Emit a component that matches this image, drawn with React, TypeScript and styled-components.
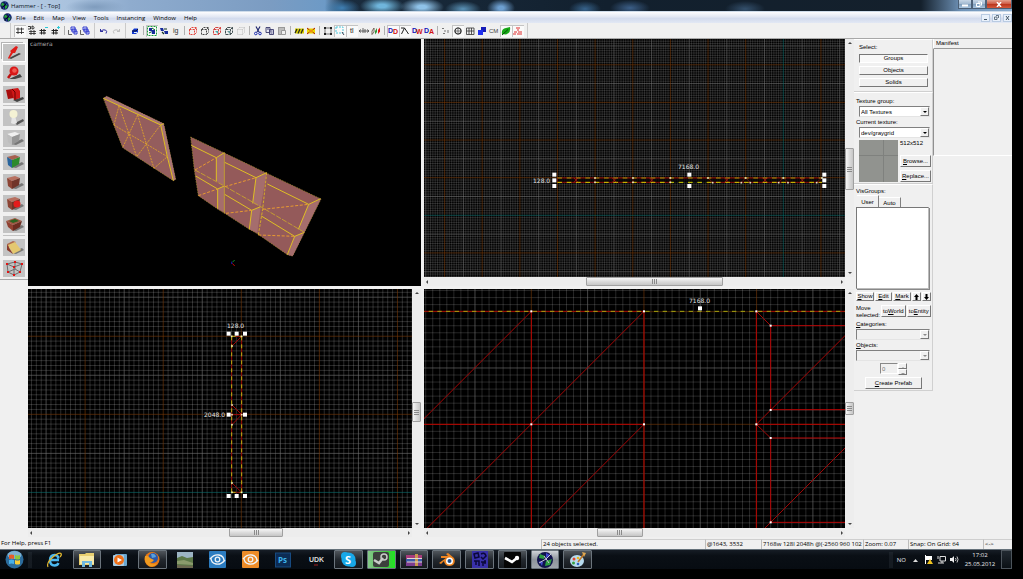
import React from "react";
import styled, { createGlobalStyle, css } from "styled-components";

const GlobalStyle = createGlobalStyle`
  * { box-sizing: border-box; }
  html, body { margin: 0; background: #000; }
  body, button, input, select {
    font-family: "Open Sans", "Noto Sans", sans-serif;
    font-size: 6px;
    line-height: 8px;
    color: #000;
  }
  button, input, select { margin: 0; padding: 0; border: 0; border-radius: 0; background: none; }
  svg { display: block; }
`;

/* ---------- window frame ---------- */

const Desktop = styled.div`
  min-height: 100vh;
  display: flex;
  flex-direction: column;
  padding: 0 11px 10px 0;
  background: #000;
`;

const TitleBar = styled.header`
  height: 12px;
  display: flex;
  align-items: center;
  background:
    radial-gradient(ellipse 30px 8px at 95px 7px, #7f9cbd 0, transparent 100%),
    radial-gradient(ellipse 18px 9px at 342px 8px, #3f7fb3 0, transparent 100%),
    radial-gradient(ellipse 22px 9px at 382px 6px, #6fb5db 20%, transparent 100%),
    radial-gradient(ellipse 22px 9px at 422px 7px, #8fc2e8 20%, transparent 100%),
    radial-gradient(ellipse 18px 8px at 463px 9px, #5b93b8 0, transparent 100%),
    radial-gradient(ellipse 14px 9px at 501px 8px, #6d9fd0 20%, transparent 100%),
    radial-gradient(ellipse 16px 8px at 585px 9px, #37638c 0, transparent 100%),
    radial-gradient(ellipse 20px 8px at 630px 8px, #3c5f88 0, transparent 100%),
    radial-gradient(ellipse 20px 8px at 745px 9px, #34506c 0, transparent 100%),
    linear-gradient(90deg, #b9cde4 0, #a9c2de 70px, #8facce 130px, #7b9cc2 270px, #6d9ac6 325px, #1a2c3e 345px, #12202e 60%, #14202c 91%, #6f93b8 95%, #8caed0 100%);
  border-bottom: 1px solid #cfdcea;
`;

const AppMark = styled.span`
  width: 9px;
  margin-right: 2px;
`;

const MenuMark = styled.span`
  width: 12px;
`;

const TitleText = styled.h1`
  margin: 0;
  flex: 1;
  font-size: 6px;
  font-weight: 400;
  color: #0c161e;
`;

const WindowButtons = styled.div`
  align-self: flex-start;
  display: flex;
`;

const WindowButton = styled.button<{ $close?: boolean }>`
  width: ${(p) => (p.$close ? 26 : 14)}px;
  height: 9px;
  display: grid;
  place-items: center;
  border: 1px solid #4c6076;
  border-top: 0;
  background: ${(p) =>
    p.$close
      ? "linear-gradient(#e3a08e, #d0604a 45%, #b8331a 50%, #d2593c)"
      : "linear-gradient(#c6d6e6, #a4bbd2 45%, #7d9cba 50%, #a8c4de)"};
`;

const MenuBar = styled.nav`
  height: 11px;
  display: flex;
  align-items: center;
  background: linear-gradient(#fdfdfe, #e4e9f4 40%, #d3dbed 60%, #e2e8f4);
`;

const MenuItem = styled.button`
  padding: 0 4px;
`;

const MenuSpacer = styled.div`
  flex: 1;
`;

const ChildButton = styled.button`
  width: 9px;
  height: 8px;
  margin-left: 2px;
  display: grid;
  place-items: center;
  border: 1px solid #b9cbe2;
  background: #e9f1fb;
`;

const ToolBar = styled.div`
  height: 15px;
  display: flex;
  align-items: center;
  padding-left: 10px;
  background: #f0f0f0;
`;

const ToolGroup = styled.div<{ $first?: boolean }>`
  height: 15px;
  display: flex;
  align-items: center;
  padding: 0 3px;
  border-left: ${(p) => (p.$first ? "1px solid #cacaca" : "0")};
  border-right: 1px solid #cacaca;
`;

const ToolButton = styled.button<{ $on?: boolean }>`
  width: 12px;
  height: 12px;
  display: grid;
  place-items: center;
  ${(p) =>
    p.$on &&
    css`
      background: #fafafa;
      box-shadow: inset 1px 1px #c4c4c4;
    `}
`;

const ToolSeparator = styled.span`
  width: 1px;
  height: 9px;
  margin: 0 2px;
  background: #b0b0b0;
`;

const Main = styled.main`
  flex: 1;
  display: flex;
  background: #f0f0f0;
  border-top: 1px solid #a8a8a8;
`;

/* ---------- left tool column ---------- */

const SideTools = styled.div`
  flex: 0 0 28px;
  padding-top: 2px;
`;

const SideToolsInner = styled.div`
  padding: 3px 3px 2px;
  border-bottom: 1px solid #a8a8a8;
`;

const SideGroup = styled.div`
  display: flex;
  flex-direction: column;
  gap: 4px;
  & + & {
    margin-top: 2px;
    padding-top: 3px;
    border-top: 1px solid #c2c2c2;
  }
`;

const SideButton = styled.button<{ $on?: boolean }>`
  width: 22px;
  height: 17px;
  background: #c3c3c3;
  outline: ${(p) => (p.$on ? "1px solid #fff" : "0")};
  box-shadow: ${(p) => (p.$on ? "-2px -2px #b4b4b4" : "none")};
`;

/* ---------- viewports ---------- */

const Viewports = styled.div`
  flex: 1;
  min-width: 0;
  display: grid;
  grid-template-columns: 393fr 430fr;
  grid-template-rows: 247fr 248fr;
  gap: 3px;
  padding-bottom: 2px;
`;

const Pane = styled.section<{ $plain?: boolean }>`
  min-width: 0;
  min-height: 0;
  display: grid;
  grid-template-columns: ${(p) => (p.$plain ? "1fr" : "1fr 9px")};
  grid-template-rows: ${(p) => (p.$plain ? "1fr" : "1fr 9px")};
  background: #f0f0f0;
`;

const Canvas = styled.div`
  position: relative;
  overflow: hidden;
  background: #000;
  min-height: 0;
`;

const Drawing = styled.svg`
  position: absolute;
  inset: 0;
  width: 100%;
  height: 100%;
`;

const labelFont = {
  fontFamily: '"DejaVu Sans", sans-serif',
  fontSize: 6,
  fill: "#e4e4e4",
};

const Bar = styled.div<{ $v?: boolean; $parts: string }>`
  display: grid;
  ${(p) =>
    p.$v
      ? css`grid-template-rows: 8px ${p.$parts} 8px;`
      : css`grid-template-columns: 8px ${p.$parts} 8px;`}
  background: #ededed;
`;

const BarButton = styled.button`
  display: grid;
  place-items: center;
`;

const Thumb = styled.span<{ $v?: boolean }>`
  display: grid;
  place-items: center;
  border: 1px solid #a0a0a0;
  border-radius: 1px;
  background: linear-gradient(${(p) => (p.$v ? "90deg" : "180deg")}, #f6f6f6, #dcdcdc 50%, #c6c6c6);
`;

const arrowPath = {
  up: "M2 5L4 3L6 5Z",
  down: "M2 3L4 5L6 3Z",
  left: "M4 2L2 4L4 6Z",
  right: "M4 2L6 4L4 6Z",
};

function Arrow({ dir, color = "#444" }: { dir: keyof typeof arrowPath; color?: string }) {
  return (
    <svg width="8" height="8" viewBox="0 0 8 8">
      <path d={arrowPath[dir]} fill={color} />
    </svg>
  );
}

function ScrollBar({ v, before, size, after }: { v?: boolean; before: number; size: number; after: number }) {
  return (
    <Bar $v={v} $parts={`${before}fr ${size}fr ${after}fr`}>
      <BarButton aria-label={v ? "Scroll up" : "Scroll left"}>
        <Arrow dir={v ? "up" : "left"} />
      </BarButton>
      <span />
      <Thumb $v={v}>
        <svg width="5" height="5" viewBox="0 0 5 5">
          <path d={v ? "M0 .5H5M0 2.5H5M0 4.5H5" : "M.5 0V5M2.5 0V5M4.5 0V5"} stroke="#8a8a8a" />
        </svg>
      </Thumb>
      <span />
      <BarButton aria-label={v ? "Scroll down" : "Scroll right"}>
        <Arrow dir={v ? "down" : "right"} />
      </BarButton>
    </Bar>
  );
}

/* Grid of 64-unit squares, with brighter lines each 512 and coloured ones each 1024. */
function Grid({ step, ox, oy, axisX, axisY, dim }: { step: number; ox: number; oy: number; axisX?: number; axisY?: number; dim: number }) {
  const paths = { minor: "", mid: "", major: "", axis: "" };
  const add = (origin: number, limit: number, axis: number | undefined, line: (p: number) => string) => {
    const first = Math.ceil(-origin / step);
    for (let k = first; origin + k * step < limit; k++) {
      const kind = k === axis ? "axis" : k % 16 === 0 ? "major" : k % 8 === 0 ? "mid" : "minor";
      paths[kind] += line(+(origin + k * step).toFixed(2));
    }
  };
  add(ox, 1920, axisX, (p) => `M${p} 0V1200`);
  add(oy, 1200, axisY, (p) => `M0 ${p}H1920`);
  return (
    <g strokeWidth=".6" fill="none">
      <path d={paths.minor} stroke="#fff" strokeOpacity={dim} />
      <path d={paths.mid} stroke="#757575" />
      <path d={paths.major} stroke="#7a3a08" />
      <path d={paths.axis} stroke="#0a7272" />
    </g>
  );
}

function Points({ at, size, fill = "#fff" }: { at: number[][]; size: number; fill?: string }) {
  return (
    <g fill={fill}>
      {at.map(([x, y]) => (
        <rect key={`${x}-${y}`} x={x - size / 2} y={y - size / 2} width={size} height={size} />
      ))}
    </g>
  );
}

const unit = "scale(.33333)";

function CameraView() {
  return (
    <Drawing role="img" aria-label="3D camera view">
      <text x="2" y="7" {...labelFont} fill="#a8a8a8">camera</text>
      <g transform={`translate(62 41) ${unit}`} fill="none" strokeWidth="3">
        <path d="M40 55L50 49L221 131L257 298L250 302L98 203Z" fill="#945d5d" stroke="#a08a2c" strokeDasharray="5 3" strokeWidth="2" />
        <path d="M40 55L50 49L221 131L257 298L250 302L212 135Z" fill="#a87474" />
        <path d="M40 55L212 135L232 230L250 302M212 135L221 131" stroke="#e0c020" />
        <path d="M87 77L72 135M87 77L117 162L140 230M143 105L117 162L98 203M143 105L169 192L192 265M210 137L169 192L140 230M72 135L117 162L169 192L232 230L192 265" stroke="#d89c30" strokeDasharray="6 3" strokeWidth="3" />
        <path d="M302 171L693 357L608 528L592 524L500 460L478 448L404 400L384 388L325 347L313 270Z" fill="#945a5a" stroke="#a08a2c" strokeDasharray="5 3" strokeWidth="2" />
        <path d="M379 233L403 218V318L379 303ZM498 293L530 278L512 380L488 370ZM656 373L692 356L643 457L625 448ZM383 327L403 318V397L383 386ZM485 391L512 380L502 458L478 448ZM614 469L643 457L608 528L592 524Z" fill="#a56d6d" />
        <path d="M304 196L379 233L403 218M379 233V303M317 288L383 327L403 318M383 327V386M404 247L498 293L530 278M498 293L488 370M404 343L485 391L512 380M485 391L478 448M532 312L656 373L692 356M656 373L625 448M514 408L614 469L643 457M614 469L592 524" stroke="#dfbf24" />
        <path d="M403 218V400" stroke="#c09c34" />
        <path d="M315 270L403 318L512 380L643 457" stroke="#c49c32" strokeDasharray="16 4" />
        <path d="M315 270L379 233M325 347L383 327M405 320L498 293M408 400L485 391M518 388L656 373M505 465L614 469" stroke="#e89a30" strokeDasharray="9 5" />
        <path d="M530 278L518 388L505 465" stroke="#d4aa28" strokeDasharray="8 4" />
        <path d="M434 540L427 547" stroke="#0a9a20" />
        <path d="M427 550L434 558" stroke="#c00808" />
        <path d="M425 545V552" stroke="#1010b0" />
      </g>
    </Drawing>
  );
}

function TopView() {
  const crosses = [498, 613, 725, 950, 1065, 1177];
  return (
    <Drawing role="img" aria-label="Top view">
      <Grid step={2.352} ox={359.3} oy={176.3} axisX={0} axisY={0} dim={0.23} />
      <g transform={`translate(-14 101) ${unit}`} fill="none">
        <rect x="442" y="114" width="794" height="14" fill="#000" fillOpacity=".7" />
        <path d="M442 114H1236M442 127H781M894 127H1236" stroke="#8c0808" strokeWidth="3" />
        <path d="M442 114H1236" stroke="#a0a010" strokeWidth="3" strokeDasharray="14 14" />
        <path d="M442 127H1236" stroke="#d6d600" strokeWidth="3" strokeDasharray="14 14" />
        <path d="M442 114V127M555 114V127M669 114V127M781 114V127M894 114L908 127M1007 114L994 127M1007 114L1021 127M1120 114L1106 127M1120 114L1134 127M1236 114L1220 127" stroke="#8c1010" strokeWidth="2" />
        <path d={crosses.map((x) => `M${x - 6} 114L${x + 6} 127M${x + 6} 114L${x - 6} 127`).join("")} stroke="#d01818" strokeWidth="2" />
        <Points size={5} fill="#e8e8c0" at={[[555, 114], [555, 127], [669, 114], [669, 127], [781, 114], [781, 127], [894, 114], [908, 128], [994, 128], [1007, 114], [1021, 128], [1106, 128], [1120, 114], [1134, 128], [1220, 128], [1236, 114]]} />
        <Points size={12} at={[[433, 104], [433, 121], [433, 138], [838, 104], [838, 138], [1243, 104], [1243, 121], [1243, 138]]} />
      </g>
      <text x="254" y="130" {...labelFont}>7168.0</text>
      <text x="109" y="144" {...labelFont}>128.0</text>
    </Drawing>
  );
}

function FrontView() {
  return (
    <Drawing role="img" aria-label="Front view">
      <Grid step={4.88} ox={213.3} oy={203.4} axisY={0} dim={0.28} />
      <g transform={`translate(172 11) ${unit}`} fill="none">
        <path d="M95 109V577M125 109V577M95 109H125M95 577H125" stroke="#9c0808" strokeWidth="3" />
        <path d="M95 109V577M125 109V577M95 109H125M95 577H125" stroke="#b4b414" strokeWidth="3" strokeDasharray="12 12" />
        <path d="M96 138L125 109M96 315L125 344L96 374M95 344H125M96 549L125 577" stroke="#a00808" strokeWidth="3" />
        <Points size={5} fill="#e8e8b0" at={[[95, 109], [125, 109], [96, 138], [96, 315], [96, 344], [125, 344], [96, 374], [96, 549], [96, 577], [125, 577]]} />
        <Points size={12} at={[[86, 101], [110, 101], [135, 101], [86, 344], [135, 344], [86, 588], [110, 588], [135, 588]]} />
      </g>
      <text x="199" y="39" {...labelFont}>128.0</text>
      <text x="176" y="128" {...labelFont}>2048.0</text>
    </Drawing>
  );
}

function SideView() {
  return (
    <Drawing role="img" aria-label="Side view">
      <Grid step={7.04} ox={107.3} oy={135.3} dim={0.25} />
      <g transform={`translate(-4 -4) ${unit}`} fill="none" strokeWidth="3">
        <path d="M0 79H672M1009 79H1290" stroke="#a80808" />
        <path d="M0 79H1290" stroke="#a8a810" strokeDasharray="13 13" />
        <path d="M334 79V740M672 79V740M1009 79V740M1052 122V374M1052 459V712M0 418H672M1009 418H1290M1052 122H1290M1052 374H1290M1052 459H1290M1052 712H1290" stroke="#b80404" />
        <path d="M334 79L0 413M672 79L10 741M672 418L349 741M1009 79L1052 122M1009 418L1290 137M1009 418L1052 459M1024 740L1290 474" stroke="#a40606" />
        <Points size={6} at={[[334, 79], [672, 79], [1009, 79], [334, 418], [672, 418], [1009, 418], [1052, 122], [1052, 375], [1052, 459], [1052, 712]]} />
        <Points size={12} at={[[840, 70]]} />
      </g>
      <text x="265" y="14" {...labelFont}>7168.0</text>
    </Drawing>
  );
}

/* ---------- right hand panels ---------- */

const ControlColumn = styled.aside`
  flex: 0 0 79px;
  font-family: "Liberation Sans", Arial, sans-serif;
  button, select, input { font-family: inherit; }
`;

const Panel = styled.section`
  display: flex;
  flex-direction: column;
  padding: 3px 1px 1px 2px;
  border: 1px solid #d0d0d0;
  border-top-color: #fff;
  border-left: 0;
`;

const PanelRow = styled.div<{ $gap?: number; $top?: number; $indent?: boolean; $center?: boolean }>`
  display: flex;
  gap: ${(p) => p.$gap ?? 2}px;
  margin-top: ${(p) => p.$top ?? 0}px;
  padding-left: ${(p) => (p.$indent ? 3 : 0)}px;
  justify-content: ${(p) => (p.$center ? "center" : "flex-start")};
`;

const FieldLabel = styled.label`
  line-height: 10px;
`;

const PanelText = styled.span`
  line-height: 7px;
  white-space: nowrap;
`;

const raised = css`
  background: #f0f0f0;
  border: 1px solid;
  border-color: #fff #777 #777 #fff;
`;

const PushButton = styled.button<{ $tall?: boolean; $on?: boolean; $w?: number }>`
  ${raised}
  flex: ${(p) => (p.$w ? `0 0 ${p.$w}px` : "1")};
  height: ${(p) => (p.$tall ? 12 : 9)}px;
  line-height: ${(p) => (p.$tall ? 10 : 7)}px;
  white-space: nowrap;
  svg { margin: 0 auto; }
  ${(p) =>
    p.$on &&
    css`
      border-color: #777 #fff #fff #777;
      background: #f8f8f8;
    `}
`;

const SelectStack = styled.div`
  display: flex;
  flex-direction: column;
  gap: 3px;
  padding: 1px 3px 3px;
  button { flex: none; }
`;

const Combo = styled.div<{ $indent?: boolean; $off?: boolean }>`
  display: flex;
  height: 11px;
  margin-left: ${(p) => (p.$indent ? 3 : 0)}px;
  margin-right: 1px;
  border: 1px solid;
  border-color: #808080 #e4e4e4 #e4e4e4 #808080;
  background: ${(p) => (p.$off ? "#f0f0f0" : "#fff")};
`;

const ComboSelect = styled.select`
  flex: 1;
  min-width: 0;
  padding-left: 1px;
  appearance: none;
`;

const ComboArrow = styled.span`
  ${raised}
  width: 9px;
  display: grid;
  place-items: center;
  pointer-events: none;
`;

const Texture = styled.div`
  flex: 0 0 39px;
  height: 42px;
  background:
    linear-gradient(#7f817e, #7f817e) 24px 0 / 1px 100% no-repeat,
    linear-gradient(#7f817e, #7f817e) 0 15px / 100% 1px no-repeat,
    #91938f;
`;

const TextureActions = styled.div`
  flex: 1;
  display: flex;
  flex-direction: column;
  gap: 3px;
  button { flex: none; }
  span { height: 12px; }
`;

const Tabs = styled.div`
  display: flex;
  align-items: flex-end;
  padding-left: 1px;
`;

const Tab = styled.button<{ $on?: boolean }>`
  width: 22px;
  height: ${(p) => (p.$on ? 12 : 10)}px;
  border-right: 1px solid #808080;
  border-top: 1px solid #fff;
`;

const VisList = styled.div`
  height: 82px;
  margin: 0 2px 0 0;
  border: 1px solid;
  border-color: #777 #bbb #bbb #777;
  background: #fff;
  box-shadow: 1px 1px #888;
`;

const SpinInput = styled.input`
  width: 18px;
  height: 11px;
  padding-left: 1px;
  border: 1px solid;
  border-color: #888 #fff #fff #888;
  color: #777;
`;

const Spinner = styled.div`
  display: flex;
  flex-direction: column;
`;

const SpinButton = styled.button`
  ${raised}
  width: 9px;
  height: 6px;
  display: grid;
  place-items: center;
  overflow: hidden;
`;

const ManifestColumn = styled.aside`
  flex: 0 0 79px;
  font-family: "Liberation Sans", Arial, sans-serif;
`;

const ManifestTitle = styled.h2`
  margin: 0;
  height: 10px;
  padding-left: 2px;
  border-bottom: 1px solid #999;
  border-left: 1px solid #fff;
  font-size: 6px;
  font-weight: 400;
  line-height: 9px;
`;

const ManifestList = styled.div`
  height: 107px;
  border-left: 1px solid #909090;
  border-bottom: 1px solid #fff;
`;

function Select({ id, value, indent, off }: { id: string; value?: string; indent?: boolean; off?: boolean }) {
  return (
    <Combo $indent={indent} $off={off}>
      <ComboSelect id={id} disabled={off}>
        <option>{value}</option>
      </ComboSelect>
      <ComboArrow>
        <Arrow dir="down" color={off ? "#888" : "#000"} />
      </ComboArrow>
    </Combo>
  );
}

/* ---------- status bar and taskbar ---------- */

const StatusBar = styled.footer`
  height: 10px;
  display: grid;
  grid-template-columns: 1fr 164px 56px 102px 45px 75px 29px;
  background: #f0f0f0;
`;

const StatusCell = styled.span<{ $edge?: boolean }>`
  overflow: hidden;
  padding-left: 1px;
  line-height: 9px;
  white-space: nowrap;
  border-left: ${(p) => (p.$edge ? "1px solid #bdbdbd" : "0")};
  border-top: ${(p) => (p.$edge ? "1px solid #cfcfcf" : "0")};
`;

const TaskBar = styled.nav`
  height: 20px;
  display: flex;
  align-items: center;
  border-top: 1px solid #65717a;
  background: linear-gradient(#161d25, #0a0f15 30%, #070c12);
`;

const StartButton = styled.button`
  width: 28px;
  display: grid;
  place-items: center;
`;

const Grip = styled.span`
  width: 4px;
  height: 16px;
  background: radial-gradient(circle, #48525c 30%, transparent 60%) 0 0 / 2px 2px;
  opacity: 0.6;
`;

const TaskItems = styled.div`
  flex: 0 1 556px;
  margin-left: 6px;
  display: grid;
  grid-template-columns: repeat(17, 1fr);
`;

const TaskItem = styled.button<{ $state?: "open" | "active" | "green" }>`
  height: 19px;
  margin: 0 2px;
  display: grid;
  place-items: center;
  border-radius: 1px;
  ${(p) =>
    p.$state &&
    css`
      border: 1px solid #6b747c;
      background: ${p.$state === "open"
        ? "linear-gradient(#50565c, #23282e 50%, #15191e)"
        : p.$state === "active"
          ? "linear-gradient(#cfd3d8, #8e949b 50%, #a0a6ad)"
          : "linear-gradient(90deg, #86c98a, #40c540 70%, #20e820)"};
    `}
`;

const Tray = styled.div`
  flex: 1;
  display: flex;
  justify-content: flex-end;
  align-items: center;
  gap: 4px;
  color: #e8eaec;
`;

const Clock = styled.time`
  width: 34px;
  text-align: center;
  line-height: 9px;
`;

const ShowDesktop = styled.button`
  width: 11px;
  height: 19px;
  border: 1px solid #4c545b;
  background: linear-gradient(#222a31, #0b1015);
`;

/* ---------- icons ---------- */

const S = ({ w = 12, h = 12, children }: { w?: number; h?: number; children: React.ReactNode }) => (
  <svg width={w} height={h} viewBox={`0 0 ${w} ${h}`} fill="none" aria-hidden="true">
    {children}
  </svg>
);

const HammerGlobe = () => (
  <>
    <circle cx="4.5" cy="4.5" r="4.2" fill="#10205c" />
    <path d="M2 1.500Q4 2 4.500 4Q3 5 1 4.500ZM5 5L7.500 4L7 7L5 8Z" fill="#26a838" />
    <path d="M5 1L8 3L6 4ZM2 6L4 6L4 8Z" fill="#2c54d8" />
    <path d="M2 7.500L6.500 2" stroke="#06080e" />
  </>
);

const mesh = (c: string) => <path d="M4 2.500V9M7.500 2.500V9M2 4H10M2 7.500H10" stroke={c} strokeWidth=".8" />;
const wireCube = (c: string, dash?: string) => (
  <path d="M2.500 4.500H7.500V9.500H2.500ZM4.500 2.500H9.500V7.500M2.500 4.500L4.500 2.500M7.500 4.500L9.500 2.500M7.500 9.500L9.500 7.500" stroke={c} strokeDasharray={dash} strokeWidth=".9" />
);
const windows = (
  <>
    <path d="M4 2H8V5H4ZM5 4H9V7H5ZM7 6H10V9H7Z" fill="#dfe4ff" stroke="#2730c8" strokeWidth=".9" />
    <path d="M1.500 5V9.500H5" stroke="#555" strokeWidth=".9" />
  </>
);
const letter = (t: string, c: string, x: number, y: number) => (
  <text x={x} y={y} fontFamily="Liberation Sans, sans-serif" fontSize="7" fontWeight="700" fill={c}>{t}</text>
);

type ToolDef = { label: string; on?: boolean; icon: React.ReactNode } | "|";

const toolGroups: ToolDef[][] = [
  [
    { label: "Toggle 2D grid", on: true, icon: mesh("#222") },
    { label: "Toggle 3D grid", icon: <><path d="M5 5V10M8 5V10M3 6.500H10M3 8.500H10" stroke="#222" strokeWidth=".8" /><path d="M2 1.500H4.500V4H2M6 1V4Q8.500 4 8 2.500Q7.500 1 6 1" stroke="#222" strokeWidth=".9" /></> },
    { label: "Smaller grid", icon: <><path d="M3.500 4V9.500M6 4V9.500M1.500 5.500H8M1.500 8H8" stroke="#222" /><path d="M7 2.500H10" stroke="#2cc8d8" /></> },
    { label: "Bigger grid", icon: <><path d="M3.500 4V9.500M6 4V9.500M1.500 5.500H8M1.500 8H8" stroke="#222" /><path d="M7 2.500H10M8.500 1V4" stroke="#2cc8d8" /></> },
    "|",
    { label: "Load window state", icon: windows },
    { label: "Save window state", icon: windows },
  ],
  [
    { label: "Undo", icon: <path d="M2.500 4V6.500H5M2.500 6.500Q5 4 7.500 5Q9.500 6 8 8.500" stroke="#2a2a9c" /> },
    { label: "Redo", icon: <path d="M9.500 4V6.500H7M9.500 6.500Q7 4 4.500 5Q2.500 6 4 8.500" stroke="#bdbdbd" /> },
  ],
  [
    { label: "Carve", icon: <><path d="M3 6L5 3.500H9V7L7 9H3Z" fill="#1238d0" /><path d="M3 6H7L9 4" stroke="#0b1030" /><path d="M5 7H8V8H5Z" fill="#d8f0ff" /></> },
    "|",
    { label: "Group", on: true, icon: <><rect x="1.500" y="1.500" width="9" height="9" stroke="#1a9a3a" strokeDasharray="2 1" /><path d="M3 3H6V6H3ZM5 5H9V9H6Z" fill="#152a9a" /><path d="M6 3L9 5M3 8L5 7" stroke="#062" /></> },
    { label: "Ungroup", icon: <><path d="M2 3H5L6 6H3ZM6 6H10V9H7Z" fill="#152a9a" /><path d="M6 4H9M4 7L6 9" stroke="#132" strokeWidth="1.200" /></> },
    { label: "Ignore groups", icon: <text x="3" y="8" fontFamily="Liberation Sans, sans-serif" fontSize="7" fill="#333">ig</text> },
    "|",
    { label: "Hide selected", icon: wireCube("#e03028", "2 1") },
    { label: "Hide unselected", icon: wireCube("#333", "2 1") },
    { label: "Show hidden", icon: <>{wireCube("#d0302c", "3 1")}<path d="M4 6H7V9Z" fill="#4aa" /></> },
    { label: "Cordon", icon: <>{wireCube("#2c3c40", "3 1")}<path d="M4 6H7V9Z" fill="#699" /></> },
    { label: "Edit cordon", icon: wireCube("#b8b8b8", "1 1") },
    "|",
    { label: "Cut", icon: <><path d="M4 1.500L7 7M8 1.500L5 7" stroke="#222a70" strokeWidth="1.200" /><circle cx="3.800" cy="8.500" r="1.300" stroke="#1c2cb0" /><circle cx="8" cy="8.500" r="1.300" stroke="#1c2cb0" /></> },
    { label: "Copy", icon: <path d="M2 2.500H6V7.500H2ZM5.500 4.500H9.500V9.500H5.500ZM3 4H5M6.500 6H8.500M6.500 8H8.500" fill="#e8e8f4" stroke="#3a3a6c" strokeWidth=".9" /> },
    { label: "Paste", icon: <><rect x="2.500" y="2.500" width="6" height="7" fill="#bdbdbd" stroke="#999" /><path d="M5.500 5.500H9.500V9.500H5.500Z" fill="#eee" stroke="#999" /></> },
    "|",
    { label: "Toggle cordon", icon: <><rect x="2" y="3.500" width="9" height="5" fill="#d8d000" /><path d="M2 8L4 4M5 8.500L7 4M8 8.500L10 4" stroke="#222" strokeWidth="1.200" /></> },
    { label: "Toggle radius culling", icon: <><rect x="2" y="3.500" width="8" height="5" fill="#e8d800" /><path d="M2 3L4.500 5M10 3L7.500 5M2 9L4.500 7M10 9L7.500 7" stroke="#b01010" /><circle cx="6" cy="6" r="1.500" fill="#f09010" /></> },
    "|",
    { label: "Select handles", icon: <><rect x="3" y="3" width="6" height="6" stroke="#555" strokeWidth=".8" /><path d="M2 2H4V4H2ZM8 2H10V4H8ZM2 8H4V10H2ZM8 8H10V10H8Z" fill="#222" /></> },
    { label: "Auto selection", on: true, icon: <><rect x="2" y="2" width="7" height="6" stroke="#50c8dc" strokeDasharray="2 1" /><path d="M8 7L10 10" stroke="#445" /></> },
    { label: "Texture lock", on: true, icon: <text x="4" y="8" fontFamily="Liberation Sans, sans-serif" fontSize="7" fill="#222">tl</text> },
    { label: "Scaling texture lock", icon: <path d="M1 6H11M3 4.500L1 6L3 7.500M9 4.500L11 6L9 7.500M5 3V8M7 4V8" stroke="#444" strokeWidth=".8" /> },
    { label: "Face mask", icon: <><path d="M2 6L4 3V7L2 9.500Z" stroke="#604838" strokeWidth=".8" /><path d="M5 6L7 3V7L5 9.500Z" fill="#309838" /><path d="M8 5L10 2.500V6.500L8 9Z" fill="#e01818" /></> },
    "|",
    { label: "Draw detail", on: true, icon: <>{letter("D", "#1414b8", 1, 8)}{letter("D", "#d01010", 6, 9)}</> },
    { label: "Draw path", on: true, icon: <path d="M2 3H5.500L9.500 9M5.500 3L2.500 9" stroke="#222" /> },
    { label: "Draw water", icon: <>{letter("D", "#1414b8", 1, 8)}{letter("W", "#d01010", 5, 9)}</> },
    { label: "Draw areas", icon: <>{letter("D", "#1414b8", 1, 8)}{letter("A", "#d01010", 6, 9)}</> },
    "|",
    { label: "Snap vertices", icon: <path d="M2 3.500H4M4 6H6M3 8.500H5M8 5V8" stroke="#777" /> },
    { label: "Toggle helpers", on: true, icon: <><circle cx="6" cy="6" r="3" stroke="#333" strokeWidth="1.200" /><path d="M6 2V10M2 6H10" stroke="#555" strokeWidth=".8" /></> },
    { label: "Toggle models", icon: <path d="M2.500 3H10V9.500H2.500ZM2.500 6H10M5 3V9.500M7.500 3V9.500" stroke="#333" strokeWidth=".8" /> },
    { label: "Toggle 3D cubes", icon: <><rect x="5" y="2" width="5" height="5" fill="#161cb8" /><rect x="2" y="5" width="5" height="5" fill="#2030ee" /></> },
    { label: "Collision models", icon: <text x="1" y="8" fontFamily="Liberation Sans, sans-serif" fontSize="6" fill="#444">CM</text> },
    { label: "Detail sprites", on: true, icon: <><path d="M2 9Q1 4 6 3L10 2Q11 8 6 9.500Z" fill="#16a816" /><path d="M2 10L8 4.500" stroke="#075007" /></> },
    { label: "No draw", on: true, icon: <path d="M4 3H8M5 5H7M2 7H5M6 7H10M1 9H4M5 9H10" stroke="#e02c2c" strokeWidth="1.200" /> },
  ],
];

const shadow = <path d="M8 14L19 9L21 11L13 15Z" fill="#555" opacity=".7" />;
const block = (top: string, left: string, right: string) => (
  <>
    {shadow}
    <path d="M4 4L12 2L17 4L9 7Z" fill={top} />
    <path d="M4 4L9 7V15L5 12Z" fill={left} />
    <path d="M9 7L17 4L16 11L9 15Z" fill={right} />
  </>
);

const sideGroups: { label: string; on?: boolean; icon: React.ReactNode }[][] = [
  [
    { label: "Selection tool", on: true, icon: <><path d="M6 14L16 9L18 10L8 15Z" fill="#444" /><path d="M5 14L8 8L7 7L13 2L15 3L12 9L10 9L6 15Z" fill="#e01c18" /></> },
    { label: "Magnify", icon: <><path d="M6 14L17 9L19 12L12 14Z" fill="#444" /><circle cx="11" cy="6" r="4.500" fill="#d81818" /><circle cx="11.500" cy="5.500" r="2.300" fill="#f05850" /><path d="M8 9L5 13" stroke="#c01010" strokeWidth="2.500" /></> },
    { label: "Camera", icon: <><path d="M10 14L20 11L21 13L14 16Z" fill="#444" /><path d="M3 4L9 3L11 12L5 13Z" fill="#a80c0c" /><path d="M8 3L15 2L17 5V12L11 14Z" fill="#d01818" /><path d="M9 3L12 6V14" stroke="#600" /></> },
  ],
  [
    { label: "Entity tool", icon: <><path d="M12 14L20 10L21 12L14 16Z" fill="#555" /><path d="M9 7H12L14 14Q11 16 8 14Z" fill="#e6e6e6" /><circle cx="10.500" cy="5" r="4" fill="#f4f2d4" /></> },
    { label: "Block tool", icon: block("#f0f0f0", "#bdbdbd", "#969696") },
  ],
  [
    { label: "Toggle texture application", icon: block("#a86050", "#28649c", "#2c8a2c") },
    { label: "Apply current texture", icon: block("#b87060", "#8c4434", "#703428") },
    { label: "Apply decals", icon: <>{block("#b87060", "#8c4434", "#703428")}<circle cx="14" cy="9" r="3.500" fill="#e41c1c" /></> },
    { label: "Apply overlays", icon: <>{shadow}<path d="M3 5L12 2L19 5L10 9Z" fill="#a05844" /><path d="M6 5L12 3L16 5L10 7Z" fill="#2c6420" /><path d="M3 5L10 9V15L5 11Z" fill="#904030" /><path d="M10 9L19 5L17 11L10 15Z" fill="#6c2c20" /></> },
  ],
  [
    { label: "Clipping tool", icon: <>{shadow}<path d="M4 5L10 2L13 3L5 9Z" fill="#b06c50" /><path d="M5 6L12 3L18 11L10 15Z" fill="#e4c870" /><path d="M4 5L5 7L10 15L4 11Z" fill="#8c3c2c" /></> },
    { label: "Vertex tool", icon: <><path d="M4 4L12 2L19 4L11 7ZM4 4L5 12L11 15L17 12L19 4M11 7V15M5 12L12 9L17 12M12 2V9" stroke="#6c6c6c" /><path d="M3 3h2v2h-2zM11 1h2v2h-2zM18 3h2v2h-2zM10 6h2v2h-2zM4 11h2v2h-2zM10 14h2v2h-2zM16 11h2v2h-2z" fill="#e01414" /></> },
  ],
];

function Eye({ color }: { color: string }) {
  return (
    <S w={17} h={17}>
      <rect width="17" height="17" rx="1" fill={color} />
      <path d="M1 8Q5 3 10 4Q15 5 15 10M16 9Q12 14 7 13Q2 12 2 7" stroke="#f0f4f8" strokeWidth="1.300" />
      <circle cx="8.500" cy="8.500" r="2.300" stroke="#f0f4f8" strokeWidth="1.300" />
    </S>
  );
}

const tasks: { label: string; state?: "open" | "active" | "green"; icon: React.ReactNode }[] = [
  { label: "Internet Explorer", icon: <S w={18} h={18}><path d="M13.500 7.500Q13 4 9.500 4Q5 4 5 9Q5 14.500 9.500 14.500Q12.500 14.500 13.500 12M5 9H14" stroke="#4cb8f0" strokeWidth="2.400" /><path d="M3 16Q1 12 8 6Q14 1 16 2.500Q17 4 15 6" stroke="#e8bc30" strokeWidth="1.200" /></S> },
  { label: "Explorer", state: "open", icon: <S w={18} h={17}><path d="M1 3H7L8 2H16V14H1Z" fill="#e8cf70" /><path d="M2 5H16V13H2Z" fill="#f8eaa8" /><path d="M4 16V10H14V16H11V12H7V16Z" fill="#6fb8e0" /></S> },
  { label: "Media Player", icon: <S w={16} h={16}><rect x="3" y="2" width="12" height="12" rx="1" fill="#6ca8d0" /><rect x="1" y="3" width="11" height="11" rx="1" fill="#a8cce4" /><circle cx="7" cy="8" r="5" fill="#f07018" /><path d="M5.500 5.500V10.500L10 8Z" fill="#fff" /></S> },
  { label: "Firefox", state: "open", icon: <S w={18} h={17}><circle cx="9" cy="8.500" r="7.500" fill="#e87814" /><circle cx="10" cy="7" r="5" fill="#2c58a8" /><path d="M2 5Q5 4 7 7L11 9Q9 12 6 11Q9 15 14 12Q11 17 6 15Q1 12 2 5Z" fill="#f09c20" /><path d="M8 3Q12 2 13 6L9 7Z" fill="#58a0dc" /></S> },
  { label: "Image", icon: <S w={16} h={16}><rect width="16" height="16" fill="#9cb4c4" /><path d="M0 6L5 4L10 6L16 5V16H0Z" fill="#5c7848" /><path d="M0 9L7 8L16 11V13L0 12Z" fill="#8a9a6c" /><path d="M0 13L16 14V16H0Z" fill="#6c6850" /></S> },
  { label: "Blue eye", icon: <Eye color="#2c7cc0" /> },
  { label: "Orange eye", icon: <Eye color="#ee8c28" /> },
  { label: "Photoshop", icon: <S w={16} h={16}><rect x=".5" y="1" width="15" height="14" fill="#0c2c54" stroke="#174a80" /><text x="3" y="11" fontFamily="Open Sans, sans-serif" fontSize="8" fontWeight="700" fill="#3cb4ec">Ps</text></S> },
  { label: "UDK", icon: <S w={16} h={16}><text x="1" y="10" fontFamily="Liberation Sans, sans-serif" fontSize="7" fontWeight="700" fill="#d8d8d8">UDK</text><path d="M6 13H10" stroke="#a02020" /></S> },
  { label: "Skype", state: "open", icon: <S w={17} h={17}><circle cx="8.500" cy="8.500" r="7" fill="#18a8e8" /><circle cx="5" cy="5" r="4" fill="#18a8e8" /><circle cx="12" cy="12" r="4" fill="#18a8e8" /><text x="5" y="12.500" fontFamily="Open Sans, sans-serif" fontSize="11" fontWeight="700" fill="#fff">S</text></S> },
  { label: "Steam", state: "green", icon: <S w={18} h={17}><rect x="1" y="1" width="16" height="15" rx="2" fill="#3c403c" /><path d="M2 9L7 12L11 7" stroke="#c8ccc8" strokeWidth="2.500" /><circle cx="12" cy="6" r="3" stroke="#c8ccc8" strokeWidth="1.500" /></S> },
  { label: "WinRAR", state: "open", icon: <S w={18} h={17}><path d="M1 4H17V8H1Z" fill="#a83c7c" /><path d="M1 8H17V11H1Z" fill="#3c58a8" /><path d="M1 11H17V15H1Z" fill="#7c3c90" /><path d="M10 3H13V15H10Z" fill="#c89850" /><path d="M2 7.500H17M2 11H17" stroke="#e0d8d0" /></S> },
  { label: "Blender", state: "open", icon: <S w={18} h={16}><path d="M1 11L8 6H3V4H10L8 2L10 1L16 6Q18 10 15 13Q11 15 8 13Q6 11 6 9L3 12Z" fill="#ee8420" /><circle cx="11.500" cy="9" r="3.500" fill="#fff" /><circle cx="11.500" cy="9" r="2" fill="#20508c" /></S> },
  { label: "Hammer tools", state: "open", icon: <S w={18} h={17}><rect x="1" y="0" width="16" height="17" fill="#3830a8" /><path d="M3 3L7 2L8 6L4 7ZM10 3Q14 1 15 5L12 8L10 6M3 10H8V15M5 10V14M10 11H15M12 11V15M14 9V13" stroke="#0a0838" strokeWidth="1.500" /></S> },
  { label: "Steam app", state: "open", icon: <S w={17} h={16}><rect width="17" height="16" rx="1" fill="#050505" /><path d="M1 6L8 10L13 6" stroke="#fff" strokeWidth="2.600" /><circle cx="13" cy="6" r="2.200" fill="#fff" /></S> },
  { label: "Hammer", state: "active", icon: <S w={18} h={18}><circle cx="9" cy="9" r="8" fill="#10124c" /><path d="M4 3L9 5L8 8L3 7ZM10 10L16 8L14 14L9 15Z" fill="#2c9c40" /><path d="M10 2L14 4L10 7ZM3 10L7 11L6 15Z" fill="#4048d0" /><path d="M3 12L10 8L15 3M8 5L13 12" stroke="#c8c8d8" /></S> },
  { label: "Paint", state: "open", icon: <S w={18} h={17}><ellipse cx="8" cy="10" rx="7" ry="6" fill="#b8dcf0" /><circle cx="5" cy="8" r="1.500" fill="#e04830" /><circle cx="9" cy="7" r="1.300" fill="#e8b820" /><circle cx="4.500" cy="12" r="1.500" fill="#38a040" /><circle cx="9" cy="13" r="1.300" fill="#2c60c0" /><path d="M9 11L15 3" stroke="#c07828" strokeWidth="1.500" /><path d="M13 1L17 2L15 6Z" fill="#e0a850" /></S> },
];

const menus = ["File", "Edit", "Map", "View", "Tools", "Instancing", "Window", "Help"];

export default function App() {
  return (
    <Desktop>
      <GlobalStyle />
      <TitleBar>
        <AppMark><S w={9} h={9}><HammerGlobe /></S></AppMark>
        <TitleText>Hammer - [ - Top]</TitleText>
        <WindowButtons>
          <WindowButton aria-label="Minimize"><S w={6} h={5}><path d="M0 3.500H6" stroke="#fff" strokeWidth="2" /></S></WindowButton>
          <WindowButton aria-label="Restore"><S w={6} h={6}><path d="M2 1H5.500V4.500M.5 2.500H4V5.500H.5Z" stroke="#fff" /></S></WindowButton>
          <WindowButton $close aria-label="Close"><S w={6} h={5}><path d="M1 0L5 5M5 0L1 5" stroke="#fff" strokeWidth="1.500" /></S></WindowButton>
        </WindowButtons>
      </TitleBar>

      <MenuBar aria-label="Main menu">
        <MenuMark><S w={12} h={9}><g transform="translate(3 0)"><HammerGlobe /></g></S></MenuMark>
        {menus.map((m) => <MenuItem key={m}>{m}</MenuItem>)}
        <MenuSpacer />
        <ChildButton aria-label="Minimize view"><S w={5} h={4}><path d="M1 3.500H4" stroke="#456" /></S></ChildButton>
        <ChildButton aria-label="Restore view"><S w={5} h={5}><path d="M2 .5H4.500V3M.5 2H3V4.500H.5Z" stroke="#456" strokeWidth=".8" /></S></ChildButton>
        <ChildButton aria-label="Close view"><S w={5} h={4}><path d="M1 0L4 4M4 0L1 4" stroke="#456" /></S></ChildButton>
      </MenuBar>

      <ToolBar role="toolbar">
        {toolGroups.map((group, g) => (
          <ToolGroup key={g} $first={g === 0}>
            {group.map((tool, i) =>
              tool === "|" ? (
                <ToolSeparator key={i} />
              ) : (
                <ToolButton key={tool.label} $on={tool.on} aria-label={tool.label}>
                  <S>{tool.icon}</S>
                </ToolButton>
              ),
            )}
          </ToolGroup>
        ))}
      </ToolBar>

      <Main>
        <SideTools>
          <SideToolsInner>
            {sideGroups.map((group, g) => (
              <SideGroup key={g}>
                {group.map((t) => (
                  <SideButton key={t.label} $on={t.on} aria-label={t.label}>
                    <S w={22} h={17}>{t.icon}</S>
                  </SideButton>
                ))}
              </SideGroup>
            ))}
          </SideToolsInner>
        </SideTools>

        <Viewports>
          <Pane $plain>
            <Canvas><CameraView /></Canvas>
          </Pane>
          <Pane>
            <Canvas><TopView /></Canvas>
            <ScrollBar v before={101} size={42} after={79} />
            <ScrollBar before={154} size={136} after={114} />
          </Pane>
          <Pane>
            <Canvas><FrontView /></Canvas>
            <ScrollBar v before={105} size={20} after={98} />
            <ScrollBar before={193} size={54} after={121} />
          </Pane>
          <Pane>
            <Canvas><SideView /></Canvas>
            <ScrollBar v before={105} size={13} after={105} />
            <ScrollBar before={165} size={45} after={194} />
          </Pane>
        </Viewports>

        <ControlColumn>
          <Panel>
            <SelectStack>
              <PanelText>Select:</PanelText>
              <PushButton $on>Groups</PushButton>
              <PushButton>Objects</PushButton>
              <PushButton>Solids</PushButton>
            </SelectStack>
          </Panel>
          <Panel>
            <FieldLabel htmlFor="texture-group">Texture group:</FieldLabel>
            <Select id="texture-group" value="All Textures" indent />
            <FieldLabel htmlFor="current-texture">Current texture:</FieldLabel>
            <Select id="current-texture" value="dev/graygrid" indent />
            <PanelRow $top={2} $indent>
              <Texture role="img" aria-label="dev/graygrid preview" />
              <TextureActions>
                <PanelText>512x512</PanelText>
                <PushButton $tall><u>B</u>rowse...</PushButton>
                <PushButton $tall><u>R</u>eplace...</PushButton>
              </TextureActions>
            </PanelRow>
          </Panel>
          <Panel>
            <PanelText>VisGroups:</PanelText>
            <Tabs role="tablist">
              <Tab $on role="tab" aria-selected="true">User</Tab>
              <Tab role="tab" aria-selected="false">Auto</Tab>
            </Tabs>
            <VisList />
            <PanelRow $top={3} $gap={1}>
              <PushButton $w={18}><u>S</u>how</PushButton>
              <PushButton $w={17}><u>E</u>dit</PushButton>
              <PushButton $w={18}><u>M</u>ark</PushButton>
              <PushButton $w={9} aria-label="Move up"><S w={5} h={6}><path d="M2.500 0L5 3H3.500V6H1.500V3H0Z" fill="#000" /></S></PushButton>
              <PushButton $w={9} aria-label="Move down"><S w={5} h={6}><path d="M2.500 6L5 3H3.500V0H1.500V3H0Z" fill="#000" /></S></PushButton>
            </PanelRow>
            <PanelRow $top={4} $gap={1}>
              <PanelText>Move<br />selected:</PanelText>
              <PushButton $tall>to<u>W</u>orld</PushButton>
              <PushButton $tall>to<u>E</u>ntity</PushButton>
            </PanelRow>
            <FieldLabel htmlFor="categories"><u>C</u>ategories:</FieldLabel>
            <Select id="categories" off />
            <FieldLabel htmlFor="objects"><u>O</u>bjects:</FieldLabel>
            <Select id="objects" off />
            <PanelRow $top={2} $gap={0} $center>
              <SpinInput aria-label="Count" defaultValue="0" disabled />
              <Spinner>
                <SpinButton aria-label="Increase" disabled><Arrow dir="up" color="#999" /></SpinButton>
                <SpinButton aria-label="Decrease" disabled><Arrow dir="down" color="#999" /></SpinButton>
              </Spinner>
            </PanelRow>
            <PanelRow $top={2} $center>
              <PushButton $tall $w={57}><u>C</u>reate Prefab</PushButton>
            </PanelRow>
          </Panel>
        </ControlColumn>

        <ManifestColumn>
          <ManifestTitle>Manifest</ManifestTitle>
          <ManifestList />
        </ManifestColumn>
      </Main>

      <StatusBar>
        <StatusCell>For Help, press F1</StatusCell>
        <StatusCell $edge>24 objects selected.</StatusCell>
        <StatusCell $edge>@1643, 3532</StatusCell>
        <StatusCell $edge>7168w 128l 2048h @(-2560 960 102</StatusCell>
        <StatusCell $edge>Zoom: 0.07</StatusCell>
        <StatusCell $edge>Snap: On Grid: 64</StatusCell>
        <StatusCell $edge>&lt;-&gt;</StatusCell>
      </StatusBar>

      <TaskBar aria-label="Taskbar">
        <StartButton aria-label="Start">
          <S w={19} h={19}>
            <circle cx="9.500" cy="9.500" r="9" fill="#2c6c9c" />
            <ellipse cx="9.500" cy="5" rx="7" ry="4" fill="#7cb0d0" />
            <path d="M4 5Q6.500 4 9 5V9Q6.500 8 4 9Z" fill="#e85c28" />
            <path d="M10 5Q12.500 6 15 5V9Q12.500 10 10 9Z" fill="#8cc83c" />
            <path d="M4 10Q6.500 9 9 10V14Q6.500 13 4 14Z" fill="#48b0e8" />
            <path d="M10 10Q12.500 11 15 10V14Q12.500 15 10 14Z" fill="#f8cc38" />
          </S>
        </StartButton>
        <Grip />
        <TaskItems>
          {tasks.map((t) => (
            <TaskItem key={t.label} $state={t.state} aria-label={t.label}>{t.icon}</TaskItem>
          ))}
        </TaskItems>
        <Tray>
          <Grip />
          <span>NO</span>
          <S w={10} h={6}><path d="M3 5L5.500 2L8 5Z" fill="#ddd" /></S>
          <S w={9} h={9}><path d="M1.500 0V9" stroke="#fff" /><path d="M2 1H8V5H2Z" fill="#fff" /><path d="M6 4L9 9H3Z" fill="#f0c420" /></S>
          <S w={9} h={9}><path d="M3 1.500H8.500V6H3ZM1 1V4M1 8H7M5 6V8" stroke="#ddd" /></S>
          <S w={9} h={9}><path d="M0 3H2L4 1V8L2 6H0Z" fill="#eee" /><path d="M5.500 3Q6.500 4.500 5.500 6M7 1.500Q9 4.500 7 7.500" stroke="#ccc" /></S>
          <Clock>17:02<br />25.05.2012</Clock>
          <ShowDesktop aria-label="Show desktop" />
        </Tray>
      </TaskBar>
    </Desktop>
  );
}
